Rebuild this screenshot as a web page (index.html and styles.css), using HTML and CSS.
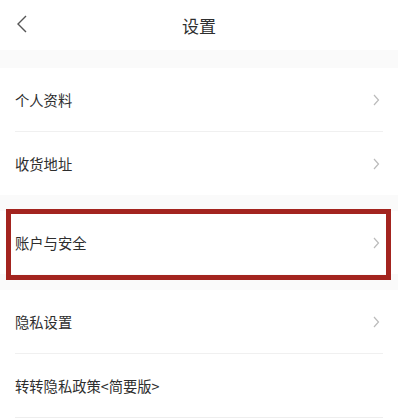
FILE: index.html
```html
<!DOCTYPE html>
<html>
<head>
    <meta http-equiv="Content-Type" content="text/html; charset=utf-8"/>
    <title>设置</title>
    <link rel="stylesheet" href="styles.css">
</head>
<body>
<div class="header">
    <svg class="back" width="12" height="20" viewBox="0 0 12 20">
        <path d="M10 2 L2 10 L10 18" fill="none" stroke="#555" stroke-width="1.4"/>
    </svg>
    <span class="title">设置</span>
</div>

<div class="band"></div>
<div class="group">
    <div class="row"><span>个人资料</span><svg class="arrow" width="7" height="12" viewBox="0 0 7 12"><path d="M1 1 L5.5 6 L1 11" fill="none" stroke="#bbb" stroke-width="1.2"/></svg></div>
    <div class="row"><span>收货地址</span><svg class="arrow" width="7" height="12" viewBox="0 0 7 12"><path d="M1 1 L5.5 6 L1 11" fill="none" stroke="#bbb" stroke-width="1.2"/></svg></div>
</div>

<div class="band"></div>
<div class="group">
    <div class="row highlighted"><span>账户与安全</span><svg class="arrow" width="7" height="12" viewBox="0 0 7 12"><path d="M1 1 L5.5 6 L1 11" fill="none" stroke="#bbb" stroke-width="1.2"/></svg></div>
</div>

<div class="band"></div>
<div class="group">
    <div class="row"><span>隐私设置</span><svg class="arrow" width="7" height="12" viewBox="0 0 7 12"><path d="M1 1 L5.5 6 L1 11" fill="none" stroke="#bbb" stroke-width="1.2"/></svg></div>
    <div class="row last"><span>转转隐私政策&lt;简要版&gt;</span></div>
</div>
</body>
</html>
```

FILE: styles.css
```css
* {
    box-sizing: border-box;
}

body {
    margin: 0;
    background: #fff;
    font-family: "Noto Sans CJK SC", "Noto Sans", sans-serif;
    color: #333;
}

/* header */
.header {
    height: 50px;
    display: flex;
    align-items: center;
    justify-content: center;
    position: relative;
}

.header .back {
    position: absolute;
    left: 16px;
    top: 14px;
}

.title {
    font-size: 17px;
    color: #2e2e2e;
}

.band {
    height: 18px;
    background: #fafafa;
}

.group + .band {
    height: 16px;
}

/* rows */
.row {
    height: 63px;
    margin: 0 15px;
    display: flex;
    align-items: center;
    justify-content: space-between;
    font-size: 14.3px;
    color: #2e2e2e;
    position: relative;
}

.row + .row {
    border-top: 1px solid #f0f0f0;
    height: 64px;
}

.row.last {
    border-bottom: 1px solid #eee;
    height: 65px;
}

.arrow {
    margin-right: 3px;
}

.highlighted::after {
    content: "";
    position: absolute;
    left: -9px;
    right: -8px;
    top: -2px;
    height: 61px;
    border: 5px solid #a3241f;
}
```
